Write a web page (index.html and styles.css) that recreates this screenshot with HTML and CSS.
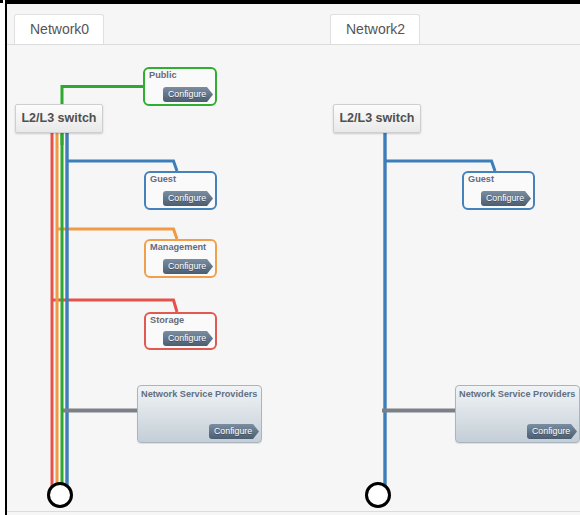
FILE: index.html
```html
<!DOCTYPE html>
<html>
<head>
<meta charset="utf-8">
<title>Networks</title>
<link rel="stylesheet" href="styles.css">
</head>
<body>
<div class="page">
  <div class="mark"></div>
  <div class="frame">
    <div class="panel">
      <div class="tabbar"><div class="tab">Network0</div></div>
      <div class="canvas">
        <svg class="wires" width="318" height="466" viewBox="0 0 318 466">
          <g fill="none" stroke-width="3" stroke-linejoin="miter">
            <polyline points="60,116 166.5,116 170,126" stroke="#3d7dba"/>
            <polyline points="50,184 166.5,184 170,194" stroke="#f09a45"/>
            <polyline points="45,255 166.5,255 170,267" stroke="#e4524a"/>
            <polyline points="55,100 55,41.5 137,41.5" stroke="#2ea82e"/>
            <line x1="45" y1="70" x2="45" y2="448" stroke="#e4524a"/>
            <line x1="50" y1="70" x2="50" y2="448" stroke="#f09a45"/>
            <line x1="55" y1="70" x2="55" y2="448" stroke="#2ea82e"/>
            <line x1="60" y1="70" x2="60" y2="448" stroke="#3d7dba" stroke-width="3.4"/>
            <line x1="56" y1="365.5" x2="131" y2="365.5" stroke="#7b8087" stroke-width="4"/>
            <circle cx="53" cy="450" r="11.5" fill="#fff" stroke="#000"/>
          </g>
        </svg>
        <div class="switch">L2/L3 switch</div>
        <div class="net net-public"><span class="net-title">Public</span><span class="cfg">Configure</span></div>
        <div class="net net-guest"><span class="net-title">Guest</span><span class="cfg">Configure</span></div>
        <div class="net net-mgmt"><span class="net-title">Management</span><span class="cfg">Configure</span></div>
        <div class="net net-storage"><span class="net-title">Storage</span><span class="cfg">Configure</span></div>
        <div class="nsp"><span class="nsp-title">Network Service Providers</span><span class="cfg">Configure</span></div>
      </div>
    </div>
    <div class="panel">
      <div class="tabbar"><div class="tab tab-second">Network2</div></div>
      <div class="canvas">
        <svg class="wires" width="318" height="466" viewBox="0 0 318 466">
          <g fill="none" stroke-width="3" stroke-linejoin="miter">
            <polyline points="60,116 166.5,116 170,126" stroke="#3d7dba"/>
            <line x1="60" y1="70" x2="60" y2="448" stroke="#3d7dba" stroke-width="3.4"/>
            <line x1="57" y1="365.5" x2="131" y2="365.5" stroke="#7b8087" stroke-width="4"/>
            <circle cx="53" cy="450" r="11.5" fill="#fff" stroke="#000"/>
          </g>
        </svg>
        <div class="switch">L2/L3 switch</div>
        <div class="net net-guest"><span class="net-title">Guest</span><span class="cfg">Configure</span></div>
        <div class="nsp"><span class="nsp-title">Network Service Providers</span><span class="cfg">Configure</span></div>
      </div>
    </div>
  </div>
</div>
</body>
</html>
```

FILE: styles.css
```css
* { box-sizing: border-box; }
html, body { margin: 0; padding: 0; background: #fff; }
body {
  font-family: "Liberation Sans", Arial, Helvetica, sans-serif;
  width: 580px;
  height: 515px;
  overflow: hidden;
}
.page { display: flex; align-items: flex-start; height: 515px; }
.mark { flex: none; width: 3px; height: 3px; background: #000; margin-right: 2px; }
.frame {
  flex: 1;
  height: 515px;
  border-top: 4px solid #000;
  border-left: 2px solid #000;
  background: #f6f6f6;
  display: flex;
  overflow: hidden;
}
.panel { flex: 0 0 318px; width: 318px; }
.tabbar {
  height: 41px;
  border-bottom: 1px solid #dcdcdc;
  padding: 10px 0 0 7px;
}
.tab {
  display: inline-block;
  height: 30px;
  line-height: 29px;
  padding: 0 14px 0 15px;
  background: #fff;
  border: 1px solid #e0e0e0;
  border-bottom: none;
  border-radius: 3px 3px 0 0;
  font-size: 14px;
  color: #555;
}
.tab-second { margin-left: -2px; }
.canvas {
  position: relative;
  height: 467px;
  border-bottom: 1px solid #dcdcdc;
}
.wires { position: absolute; left: 0; top: 0; }
.switch {
  position: absolute;
  left: 8px;
  top: 59px;
  width: 88px;
  height: 29px;
  line-height: 27px;
  text-align: center;
  font-size: 12.5px;
  font-weight: bold;
  color: #505050;
  background: linear-gradient(#fcfcfc, #e9e9e9);
  border: 1px solid #cfcfcf;
  border-radius: 2px;
  box-shadow: 0 1px 2px rgba(0,0,0,0.18);
}
.net {
  position: absolute;
  left: 137px;
  width: 73px;
  height: 39px;
  border: 2px solid #3d7dba;
  border-radius: 6px;
  background: #fafafa;
  padding: 1px 2px 2px 4px;
  display: flex;
  flex-direction: column;
  justify-content: space-between;
}
.net-public { left: 136px; width: 74px; top: 22px; border-color: #2fae2f; }
.net-guest { top: 126px; border-color: #4581bb; }
.net-mgmt { top: 194px; border-color: #f0a04c; }
.net-storage { top: 267px; height: 38px; border-color: #e05a52; }
.net-title {
  font-size: 9.2px;
  line-height: 11px;
  font-weight: bold;
  color: #676b78;
}
.cfg {
  align-self: flex-end;
  width: 50px;
  height: 15px;
  line-height: 15px;
  padding-left: 5px;
  font-size: 8.8px;
  color: #fff;
  text-shadow: 0 1px 0 rgba(0,0,0,0.3);
  background: linear-gradient(#7b8da0, #4b5d70);
  border-radius: 3px 0 0 3px;
  clip-path: polygon(0 0, 44px 0, 100% 50%, 44px 100%, 0 100%);
}
.nsp {
  position: absolute;
  left: 130px;
  top: 340px;
  width: 125px;
  height: 58px;
  border: 1px solid #aab4be;
  border-radius: 4px;
  background: linear-gradient(#f1f4f6, #c4ced7);
  box-shadow: 0 1px 1px rgba(0,0,0,0.1);
  padding: 2px 2px 3px 3px;
  display: flex;
  flex-direction: column;
  justify-content: space-between;
}
.nsp-title {
  font-size: 9.2px;
  line-height: 12px;
  font-weight: bold;
  color: #627080;
  white-space: nowrap;
}
```
